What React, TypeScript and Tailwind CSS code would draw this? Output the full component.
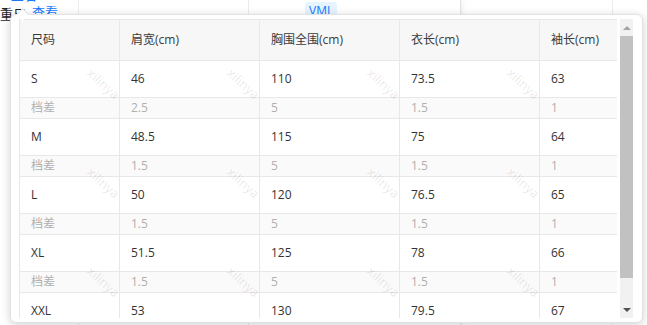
import React from "react";

const sizes = [
  { size: "S", vals: ["46", "110", "73.5", "63"], diff: ["2.5", "5", "1.5", "1"] },
  { size: "M", vals: ["48.5", "115", "75", "64"], diff: ["1.5", "5", "1.5", "1"] },
  { size: "L", vals: ["50", "120", "76.5", "65"], diff: ["1.5", "5", "1.5", "1"] },
  { size: "XL", vals: ["51.5", "125", "78", "66"], diff: ["1.5", "5", "1.5", "1"] },
  { size: "XXL", vals: ["53", "130", "79.5", "67"], diff: ["1.5", "5", "1.5", "1"] },
];

const headers = ["尺码", "肩宽(cm)", "胸围全围(cm)", "衣长(cm)", "袖长(cm)"];

// watermark tile centres
const marks: { x: number; y: number }[] = [];
for (let j = 0; j < 4; j++) {
  for (let i = -1; i < 5; i++) {
    marks.push({ x: 103 + 140 * i, y: -15 + 99 * j });
  }
}

function Cell({ children, className = "" }: { children: React.ReactNode; className?: string }) {
  return (
    <div className={`flex items-center pl-[11px] border-r border-b border-[#e8e8e8] ${className}`}>
      {children}
    </div>
  );
}

function SizeTable() {
  return (
    <div className="grid grid-cols-[100px_140px_140px_140px_78px] w-[599px] border-l border-t border-[#e8e8e8] text-[12px]">
      {headers.map((h) => (
        <Cell key={h} className="h-[41px] bg-[#f7f7f7] text-[#3a3a3a]">
          {h}
        </Cell>
      ))}
      {sizes.map((r) => (
        <React.Fragment key={r.size}>
          <Cell className="h-[37px] bg-white text-[#333]">{r.size}</Cell>
          {r.vals.map((v, i) => (
            <Cell key={"v" + i} className="h-[37px] bg-white text-[#333]">
              {v}
            </Cell>
          ))}
          <Cell className="h-[21px] bg-[#fafafa] text-[#b0b0b0]">档差</Cell>
          {r.diff.map((v, i) => (
            <Cell key={"d" + i} className="h-[21px] bg-[#fafafa] text-[#b0b0b0]">
              {v}
            </Cell>
          ))}
        </React.Fragment>
      ))}
    </div>
  );
}

function Scrollbar() {
  return (
    <div className="ml-[3px] w-[13px] h-full bg-[#f1f1f1] flex flex-col items-center">
      <div className="h-[17px] flex items-center justify-center">
        <span className="w-0 h-0 border-l-[4px] border-r-[4px] border-b-[4px] border-l-transparent border-r-transparent border-b-[#a3a3a3]" />
      </div>
      <div className="w-full h-[242px] bg-[#c1c1c1]" />
      <div className="flex-1" />
      <div className="h-[17px] flex items-center justify-center">
        <span className="w-0 h-0 border-l-[4px] border-r-[4px] border-t-[4px] border-l-transparent border-r-transparent border-t-[#505050]" />
      </div>
    </div>
  );
}

export default function App() {
  return (
    <div
      className="relative w-[647px] h-[325px] overflow-hidden bg-white"
      style={{ fontFamily: '"Open Sans", "Noto Sans CJK SC", sans-serif' }}
    >
      {/* page underneath */}
      <div className="flex h-full text-[13px]">
        <div className="relative w-[79px] border-r border-[#ececec]">
          <span className="absolute left-[4px] top-[-14px] text-[#1677ff]">· 上右</span>
          <span className="absolute left-0 top-[5px] text-[#222]">重尺</span>
          <span className="absolute left-[32px] top-[3px] text-[#1677ff]">查看</span>
        </div>
        <div className="w-[170px] border-r border-[#ececec]" />
        <div className="relative w-[212px] border-r border-[#e2e2e2] shadow-[2px_0_4px_rgba(0,0,0,0.06)]">
          <span className="absolute left-[56px] top-[2px] px-[4px] rounded-[3px] bg-[#e6f4ff] text-[#1677ff] text-[12px] leading-[18px]">
            VML
          </span>
        </div>
        <div className="w-[152px] border-r border-[#ececec]" />
        <div className="flex-1" />
      </div>

      {/* popover */}
      <div className="absolute left-[10px] top-[14px] w-[633px] h-[309px] rounded-[6px] border border-[#e2e2e2] bg-white shadow-[0_2px_10px_rgba(0,0,0,0.18)] pl-[8px] pt-[4px] pr-[9px] pb-[4px]">
        <span className="absolute left-[7px] top-[-5px] w-[9px] h-[9px] rotate-45 bg-white border-l border-t border-[#e2e2e2]" />
        <div className="flex h-full">
          <div className="w-[599px] h-full overflow-hidden">
            <SizeTable />
          </div>
          <Scrollbar />
        </div>
      </div>

      {/* watermark */}
      <div className="pointer-events-none absolute inset-0">
        {marks.map((m, i) => (
          <span
            key={i}
            className="absolute -translate-x-1/2 -translate-y-1/2 rotate-[42deg] text-[13px] text-[rgba(0,0,0,0.1)] whitespace-nowrap"
            style={{ left: m.x, top: m.y }}
          >
            xilinya
          </span>
        ))}
      </div>
    </div>
  );
}
